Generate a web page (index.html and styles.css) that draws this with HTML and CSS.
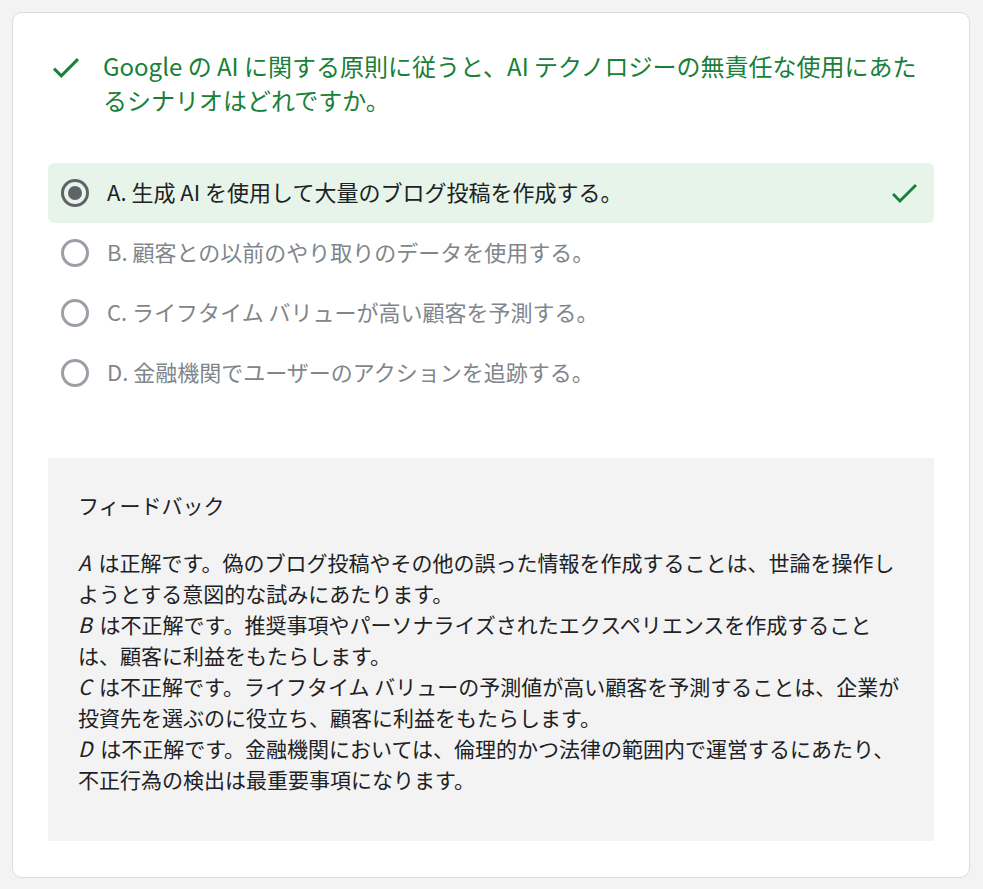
FILE: index.html
```html
<!DOCTYPE html>
<html lang="ja">
<head>
<meta charset="utf-8">
<link rel="stylesheet" href="styles.css">
</head>
<body>
<div class="card">
  <div class="question">
    <svg class="q-check" viewBox="3.4 5.6 17.6 13.4" width="26" height="20"><path d="M9 16.17L4.83 12l-1.42 1.41L9 19 21 7l-1.41-1.41z" fill="#188038"/></svg>
    <div class="q-text">Google の AI に関する原則に従うと、AI テクノロジーの無責任な使用にあたるシナリオはどれですか。</div>
  </div>
  <div class="options">
    <div class="option selected">
      <span class="radio checked"></span>
      <span class="opt-text">A. 生成 AI を使用して大量のブログ投稿を作成する。</span>
      <svg class="opt-check" viewBox="3.4 5.6 17.6 13.4" width="25" height="19"><path d="M9 16.17L4.83 12l-1.42 1.41L9 19 21 7l-1.41-1.41z" fill="#188038"/></svg>
    </div>
    <div class="option">
      <span class="radio"></span>
      <span class="opt-text">B. 顧客との以前のやり取りのデータを使用する。</span>
    </div>
    <div class="option">
      <span class="radio"></span>
      <span class="opt-text">C. ライフタイム バリューが高い顧客を予測する。</span>
    </div>
    <div class="option">
      <span class="radio"></span>
      <span class="opt-text">D. 金融機関でユーザーのアクションを追跡する。</span>
    </div>
  </div>
  <div class="feedback">
    <div class="fb-title">フィードバック</div>
    <div class="fb-body">
      <div><i>A</i> は正解です。偽のブログ投稿やその他の誤った情報を作成することは、世論を操作しようとする意図的な試みにあたります。</div>
      <div><i>B</i> は不正解です。推奨事項やパーソナライズされたエクスペリエンスを作成することは、顧客に利益をもたらします。</div>
      <div><i>C</i> は不正解です。ライフタイム バリューの予測値が高い顧客を予測することは、企業が投資先を選ぶのに役立ち、顧客に利益をもたらします。</div>
      <div><i>D</i> は不正解です。金融機関においては、倫理的かつ法律の範囲内で運営するにあたり、不正行為の検出は最重要事項になります。</div>
    </div>
  </div>
</div>
</body>
</html>
```

FILE: styles.css
```css
* { box-sizing: border-box; }
html, body { margin: 0; padding: 0; }
body {
  background: #f3f3f3;
  padding: 12px 13px 11px 12px;
  font-family: "Noto Sans CJK JP", "Noto Sans", sans-serif;
  color: #202124;
}
.card {
  background: #fff;
  border: 1px solid #dadce0;
  border-radius: 10px;
  padding: 36px 35px 35px 35px;
  height: 866px;
}
.question {
  display: flex;
  align-items: flex-start;
  padding-left: 5px;
}
.q-check {
  flex: none;
  margin-top: 9px;
  margin-right: 24px;
}
.q-text {
  color: #188038;
  font-size: 24px;
  line-height: 34px;
}
.options {
  margin-top: 46px;
  display: flex;
  flex-direction: column;
}
.option {
  display: flex;
  align-items: center;
  height: 60px;
  padding-left: 13px;
  padding-right: 17px;
  border-radius: 6px;
  color: #80868b;
  font-size: 22px;
}
.option.selected {
  background: #e6f4ea;
  color: #202124;
}
.radio {
  flex: none;
  width: 28px;
  height: 28px;
  border-radius: 50%;
  border: 3px solid #9aa0a6;
  margin-right: 18px;
  position: relative;
}
.radio.checked {
  border-color: #5f6368;
}
.radio.checked::after {
  content: "";
  position: absolute;
  left: 4px;
  top: 4px;
  width: 14px;
  height: 14px;
  border-radius: 50%;
  background: #5f6368;
}
.opt-text {
  flex: 1;
  padding-bottom: 5px;
}
.opt-check { flex: none; }
.feedback {
  margin-top: 55px;
  background: #f3f3f3;
  padding: 32px 30px 46px 30px;
  font-size: 21px;
  line-height: 31px;
  color: #202124;
}
.fb-title {
  margin-bottom: 26px;
}
.fb-body i {
  font-style: italic;
  padding-right: 3px;
}
```
